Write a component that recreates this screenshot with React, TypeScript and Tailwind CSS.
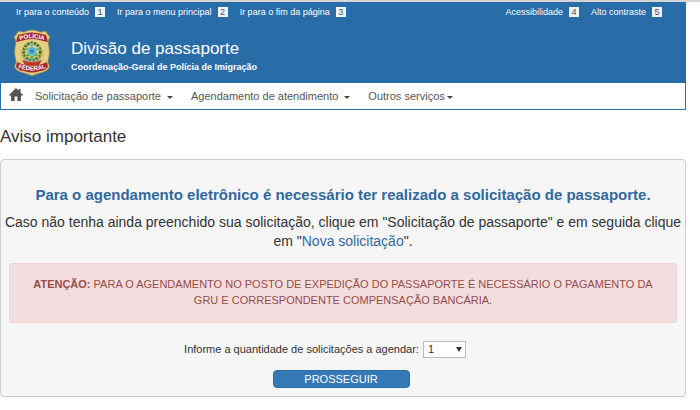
import React from "react";

function Crest() {
  return (
    <svg viewBox="0 0 38 48" className="h-12 w-[38px] shrink-0" role="img" aria-label="Polícia Federal">
      <path
        d="M19 1 C23 1 26 3 28 3 C30 3 31 2 32 2 L37 8 C35 11 35 14 36 18 C37 24 36 28 35 32 C35 35 37 36 36 39 C33 44 24 44 19 47 C14 44 5 44 2 39 C1 36 3 35 3 32 C2 28 1 24 2 18 C3 14 3 11 1 8 L6 2 C7 2 8 3 10 3 C12 3 15 1 19 1 Z"
        fill="#e6cd80"
        stroke="#8d8450"
        strokeWidth="0.7"
      />
      <path d="M5 6 L9 5 Q19 2 29 5 L33 6 L35 13 L30 12 Q19 8 8 12 L3 13 Z" fill="#a52a2f" />
      <path d="M4 33 L9 35 Q19 39 29 35 L34 33 L35 38 Q32 42 27 42 Q19 45 11 42 Q6 42 3 38 Z" fill="#a52a2f" />
      <path d="M9 31 Q19 35 29 31 L26 36 Q19 38 12 36 Z" fill="#c0392f" />
      <ellipse cx="19" cy="22.5" rx="8.2" ry="8.5" fill="none" stroke="#3c7a45" strokeWidth="3" strokeDasharray="2.6 0.8" />
      <path d="M12 31 Q8 27 9 21 M26 31 Q30 27 29 21" fill="none" stroke="#b7943a" strokeWidth="1" />
      <path
        d="M19 14 L21.2 19 L26.5 18.8 L23.4 23 L26 28 L21 27.2 L19 32 L17 27.2 L12 28 L14.6 23 L11.5 18.8 L16.8 19 Z"
        fill="#5fa857"
        stroke="#e8cf57"
        strokeWidth="0.7"
      />
      <circle cx="19" cy="22" r="4.4" fill="#4fb0d8" stroke="#b8e0de" strokeWidth="0.7" />
      <circle cx="19" cy="22" r="1.5" fill="#2f78b5" />
      <path d="M12 31.5 Q19 29 26 31.5" fill="none" stroke="#5a9ac5" strokeWidth="1.2" />
      <path id="crest-top" d="M5 12 Q19 6.5 33 12" fill="none" />
      <path id="crest-bottom" d="M4 38.5 Q19 44.5 34 38.5" fill="none" />
      <g fill="#fff" fontFamily="Liberation Sans, Arial, sans-serif" fontWeight="700" fontSize="6" textAnchor="middle">
        <text>
          <textPath href="#crest-top" startOffset="50%">POLÍCIA</textPath>
        </text>
        <text>
          <textPath href="#crest-bottom" startOffset="50%">FEDERAL</textPath>
        </text>
      </g>
    </svg>
  );
}

function HomeIcon() {
  return (
    <svg viewBox="0 0 14 13" className="h-[13px] w-3.5" fill="#555" aria-hidden="true">
      <path d="M7 0 L9.6 2.6 V1 H11.6 V4.6 L14 7 V7.6 H12 V13 H8.4 V8.4 H5.6 V13 H2 V7.6 H0 V7 Z" />
    </svg>
  );
}

function Caret() {
  return (
    <svg viewBox="0 0 6 3" className="mt-0.5 h-[3px] w-1.5" fill="#444" aria-hidden="true">
      <path d="M0 0 H6 L3 3 Z" />
    </svg>
  );
}

function SkipLink({ label, hotkey }: { label: string; hotkey: number }) {
  return (
    <a href="#conteudo" className="flex items-center gap-1.5">
      {label}
      <span className="flex h-2.5 w-2.5 items-center justify-center bg-[#eef4f9] text-[#44515e]">{hotkey}</span>
    </a>
  );
}

export default function App() {
  return (
    <div className="border-t-2 border-[#d5d5d5] bg-white pr-3.5 font-['Liberation_Sans',Arial,sans-serif] text-[#333]">
      <header className="border border-t-0 border-[#286ca8]">
        <div className="bg-[#286ca8] pb-1.5 text-white">
          <div className="flex justify-between pt-1 pr-[23px] pl-[15px] text-[9px] leading-3">
            <div className="flex gap-3">
              <SkipLink label="Ir para o conteúdo" hotkey={1} />
              <SkipLink label="Ir para o menu principal" hotkey={2} />
              <SkipLink label="Ir para o fim da página" hotkey={3} />
            </div>
            <div className="flex gap-3">
              <SkipLink label="Acessibilidade" hotkey={4} />
              <SkipLink label="Alto contraste" hotkey={5} />
            </div>
          </div>
          <div className="flex items-center gap-5 pt-[11px] pl-3">
            <Crest />
            <div className="pt-2">
              <h1 className="text-[17px] leading-5">Divisão de passaporte</h1>
              <p className="text-[9px] leading-4 font-bold">Coordenação-Geral de Polícia de Imigração</p>
            </div>
          </div>
        </div>
        <nav className="flex h-[26px] items-center text-[11px] text-[#555]">
          <a href="#inicio" aria-label="Início" className="mr-3 ml-2 pb-1">
            <HomeIcon />
          </a>
          <button type="button" className="mr-[18px] flex items-center gap-1.5">
            Solicitação de passaporte <Caret />
          </button>
          <button type="button" className="mr-[18px] flex items-center gap-1.5">
            Agendamento de atendimento <Caret />
          </button>
          <button type="button" className="flex items-center gap-0.5">
            Outros serviços <Caret />
          </button>
        </nav>
      </header>

      <main id="conteudo">
        <h2 className="pt-[17px] pb-3 text-[17px] leading-5">Aviso importante</h2>
        <section className="rounded-sm border border-[#ccc] bg-[#f6f6f6] pt-[25px] pb-2 text-center">
          <h3 className="text-[15px] leading-5 font-bold text-[#31699d]">
            Para o agendamento eletrônico é necessário ter realizado a solicitação de passaporte.
          </h3>
          <p className="pt-2 text-[14px] leading-[19px]">
            Caso não tenha ainda preenchido sua solicitação, clique em "Solicitação de passaporte" e em seguida clique em "
            <a href="#nova" className="text-[#31699d]">Nova solicitação</a>".
          </p>
          <p className="mx-2 mt-3 rounded-[3px] border border-[#eed3d7] bg-[#f2dede] px-4 pt-3 pb-3.5 text-[11px] leading-4 text-[#984b49]">
            <strong>ATENÇÃO:</strong> PARA O AGENDAMENTO NO POSTO DE EXPEDIÇÃO DO PASSAPORTE É NECESSÁRIO O PAGAMENTO DA GRU E
            CORRESPONDENTE COMPENSAÇÃO BANCÁRIA.
          </p>
          <form onSubmit={(e: React.FormEvent) => e.preventDefault()}>
            <div className="mt-[18px] flex items-center justify-center gap-1 pr-9 text-[11px]">
              <label htmlFor="quantidade">Informe a quantidade de solicitações a agendar:</label>
              <div className="relative">
                <select
                  id="quantidade"
                  defaultValue="1"
                  className="block h-[17px] w-[43px] appearance-none border border-[#bbb] bg-white pl-1 leading-[15px]"
                >
                  <option>1</option>
                  <option>2</option>
                  <option>3</option>
                  <option>4</option>
                  <option>5</option>
                </select>
                <svg viewBox="0 0 6 5" className="pointer-events-none absolute top-1.5 right-1 h-[5px] w-1.5" aria-hidden="true">
                  <path d="M0 0 H6 L3 5 Z" fill="#333" />
                </svg>
              </div>
            </div>
            <div className="flex justify-center pt-3 pr-1">
              <button
                type="submit"
                className="h-[18px] w-[137px] rounded-sm border border-[#2e6da4] bg-[#337ab7] text-[11px] leading-4 text-white"
              >
                PROSSEGUIR
              </button>
            </div>
          </form>
        </section>
      </main>
    </div>
  );
}
